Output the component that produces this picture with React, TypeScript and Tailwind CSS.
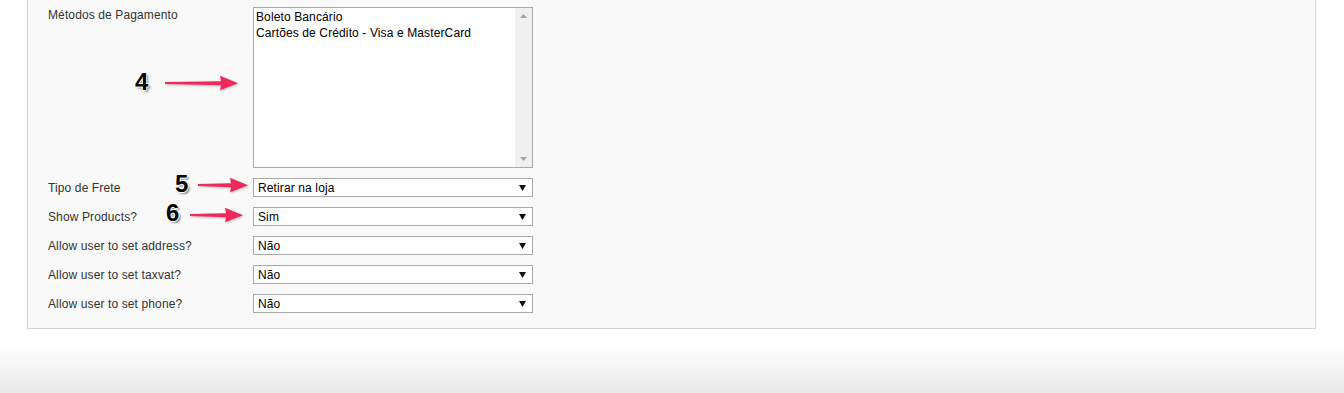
const font = { fontFamily: '"Liberation Sans", Arial, sans-serif' };

type SelectProps = { label: string; value: string };

const rows: SelectProps[] = [
  { label: 'Tipo de Frete', value: 'Retirar na loja' },
  { label: 'Show Products?', value: 'Sim' },
  { label: 'Allow user to set address?', value: 'Não' },
  { label: 'Allow user to set taxvat?', value: 'Não' },
  { label: 'Allow user to set phone?', value: 'Não' },
];

function FakeSelect({ value }: { value: string }) {
  return (
    <div className="flex h-[19px] w-[280px] items-center justify-between border border-[#a9a9a9] bg-white pl-[4px] pr-[6px] text-[12px] leading-none text-black">
      <span>{value}</span>
      <svg width="7" height="6" viewBox="0 0 7 6">
        <polygon points="0,0 7,0 3.5,6" fill="#111" />
      </svg>
    </div>
  );
}

function Arrow({ x, y, w }: { x: number; y: number; w: number }) {
  const h = 16;
  const head = 17;
  return (
    <svg
      className="absolute drop-shadow-[1px_1px_1px_rgba(0,0,0,0.25)]"
      style={{ left: x, top: y }}
      width={w}
      height={h}
      viewBox={`0 0 ${w} ${h}`}
    >
      <polygon
        points={`0,7 ${w - head},6.2 ${w - head - 1},0.8 ${w},8.2 ${w - head - 1},15.2 ${w - head},10.2 0,9`}
        fill="#ee2a5c"
      />
    </svg>
  );
}

function Num({ x, y, n }: { x: number; y: number; n: string }) {
  return (
    <span
      className="absolute text-[24px] font-bold leading-none text-black [text-shadow:-1px_0_0_#fff,1px_0_0_#fff,0_-1px_0_#fff,0_1px_0_#fff,2px_2px_2px_rgba(0,0,0,0.45)]"
      style={{ left: x, top: y, ...font }}
    >
      {n}
    </span>
  );
}

export default function App() {
  return (
    <div className="relative flex h-[393px] w-[1344px] flex-col bg-white tracking-[0.12px]" style={font}>
      <div className="pl-[27px] pr-[28px]">
        <div className="border-x border-b border-[#d3d3d3] bg-[#f9f9f9] pb-[15px] pl-[20px] pt-[7px]">
          <div className="grid grid-cols-[205px_280px] gap-y-[10px]">
            <label className="pt-[1px] text-[12px] leading-[15px] text-[#333]">Métodos de Pagamento</label>
            <div className="flex h-[161px] border border-[#a9a9a9] bg-white">
              <div className="flex-1 pl-[2px] pt-[1px] text-[12px] leading-[16px] text-black">
                <div>Boleto Bancário</div>
                <div>Cartões de Crédito - Visa e MasterCard</div>
              </div>
              <div className="flex w-[17px] flex-col items-center justify-between bg-[#f0f0f0] py-[6px]">
                <svg width="7" height="4" viewBox="0 0 7 4">
                  <polygon points="3.5,0 7,4 0,4" fill="#a3a3a3" />
                </svg>
                <svg width="7" height="4" viewBox="0 0 7 4">
                  <polygon points="0,0 7,0 3.5,4" fill="#a3a3a3" />
                </svg>
              </div>
            </div>
            {rows.map((r) => (
              <div key={r.label} className="contents">
                <label className="flex h-[19px] items-center text-[12px] text-[#333]">{r.label}</label>
                <FakeSelect value={r.value} />
              </div>
            ))}
          </div>
        </div>
      </div>
      <div className="flex-1 bg-gradient-to-b from-white from-25% to-[#e8e8e8]" />

      <Num x={135} y={70} n="4" />
      <Arrow x={165} y={75} w={73} />
      <Num x={175} y={172} n="5" />
      <Arrow x={198} y={177} w={50} />
      <Num x={166} y={201} n="6" />
      <Arrow x={190} y={207} w={53} />
    </div>
  );
}
